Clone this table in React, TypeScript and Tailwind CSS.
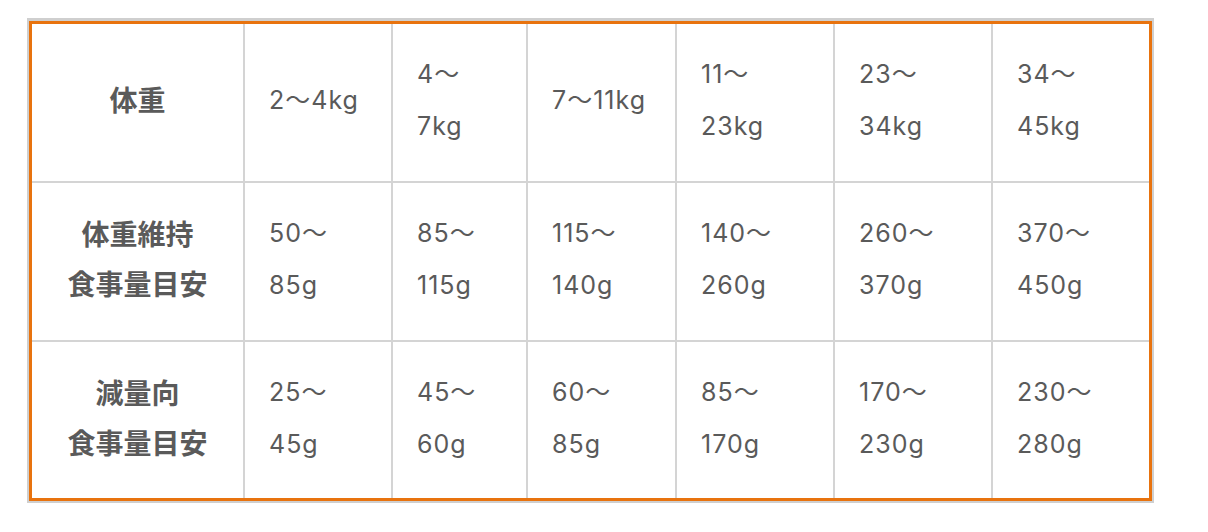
const rows = [
  {
    label: ["体重"],
    cells: [["2〜4kg"], ["4〜", "7kg"], ["7〜11kg"], ["11〜", "23kg"], ["23〜", "34kg"], ["34〜", "45kg"]],
  },
  {
    label: ["体重維持", "食事量目安"],
    cells: [["50〜", "85g"], ["85〜", "115g"], ["115〜", "140g"], ["140〜", "260g"], ["260〜", "370g"], ["370〜", "450g"]],
  },
  {
    label: ["減量向", "食事量目安"],
    cells: [["25〜", "45g"], ["45〜", "60g"], ["60〜", "85g"], ["85〜", "170g"], ["170〜", "230g"], ["230〜", "280g"]],
  },
];

export default function App() {
  return (
    <div className="w-[1208px] h-[532px] bg-white pt-[18px] pl-[27px]">
      <div className="w-[1127px] border-x-2 border-b-2 border-t-[3px] border-[#cfcfcf]">
        <div className="border-[3px] border-[#e8730e]">
          <div
            className="grid grid-cols-[211px_146px_133px_147px_156px_156px_156px] grid-rows-[157px_157px_156px] gap-[2px] bg-[#d4d4d4] text-[#5a5a5a]"
            style={{ fontFamily: "Inter, 'Noto Sans CJK JP', sans-serif" }}
          >
            {rows.map((row) => (
              <>
                <div
                  key={row.label.join("")}
                  className="bg-white flex flex-col items-center justify-center pb-[7px] text-[28px] font-bold leading-[50px]"
                  style={{ fontFamily: "'Noto Sans CJK JP', sans-serif" }}
                >
                  {row.label.map((l) => (
                    <span key={l}>{l}</span>
                  ))}
                </div>
                {row.cells.map((cell, i) => (
                  <div
                    key={i}
                    className="bg-white flex flex-col justify-center pl-6 pb-[5px] text-[25px] font-[380] leading-[52px] tracking-[0.04em]"
                  >
                    {cell.map((t) => (
                      <span key={t} className="whitespace-nowrap">
                        {t}
                      </span>
                    ))}
                  </div>
                ))}
              </>
            ))}
          </div>
        </div>
      </div>
    </div>
  );
}
